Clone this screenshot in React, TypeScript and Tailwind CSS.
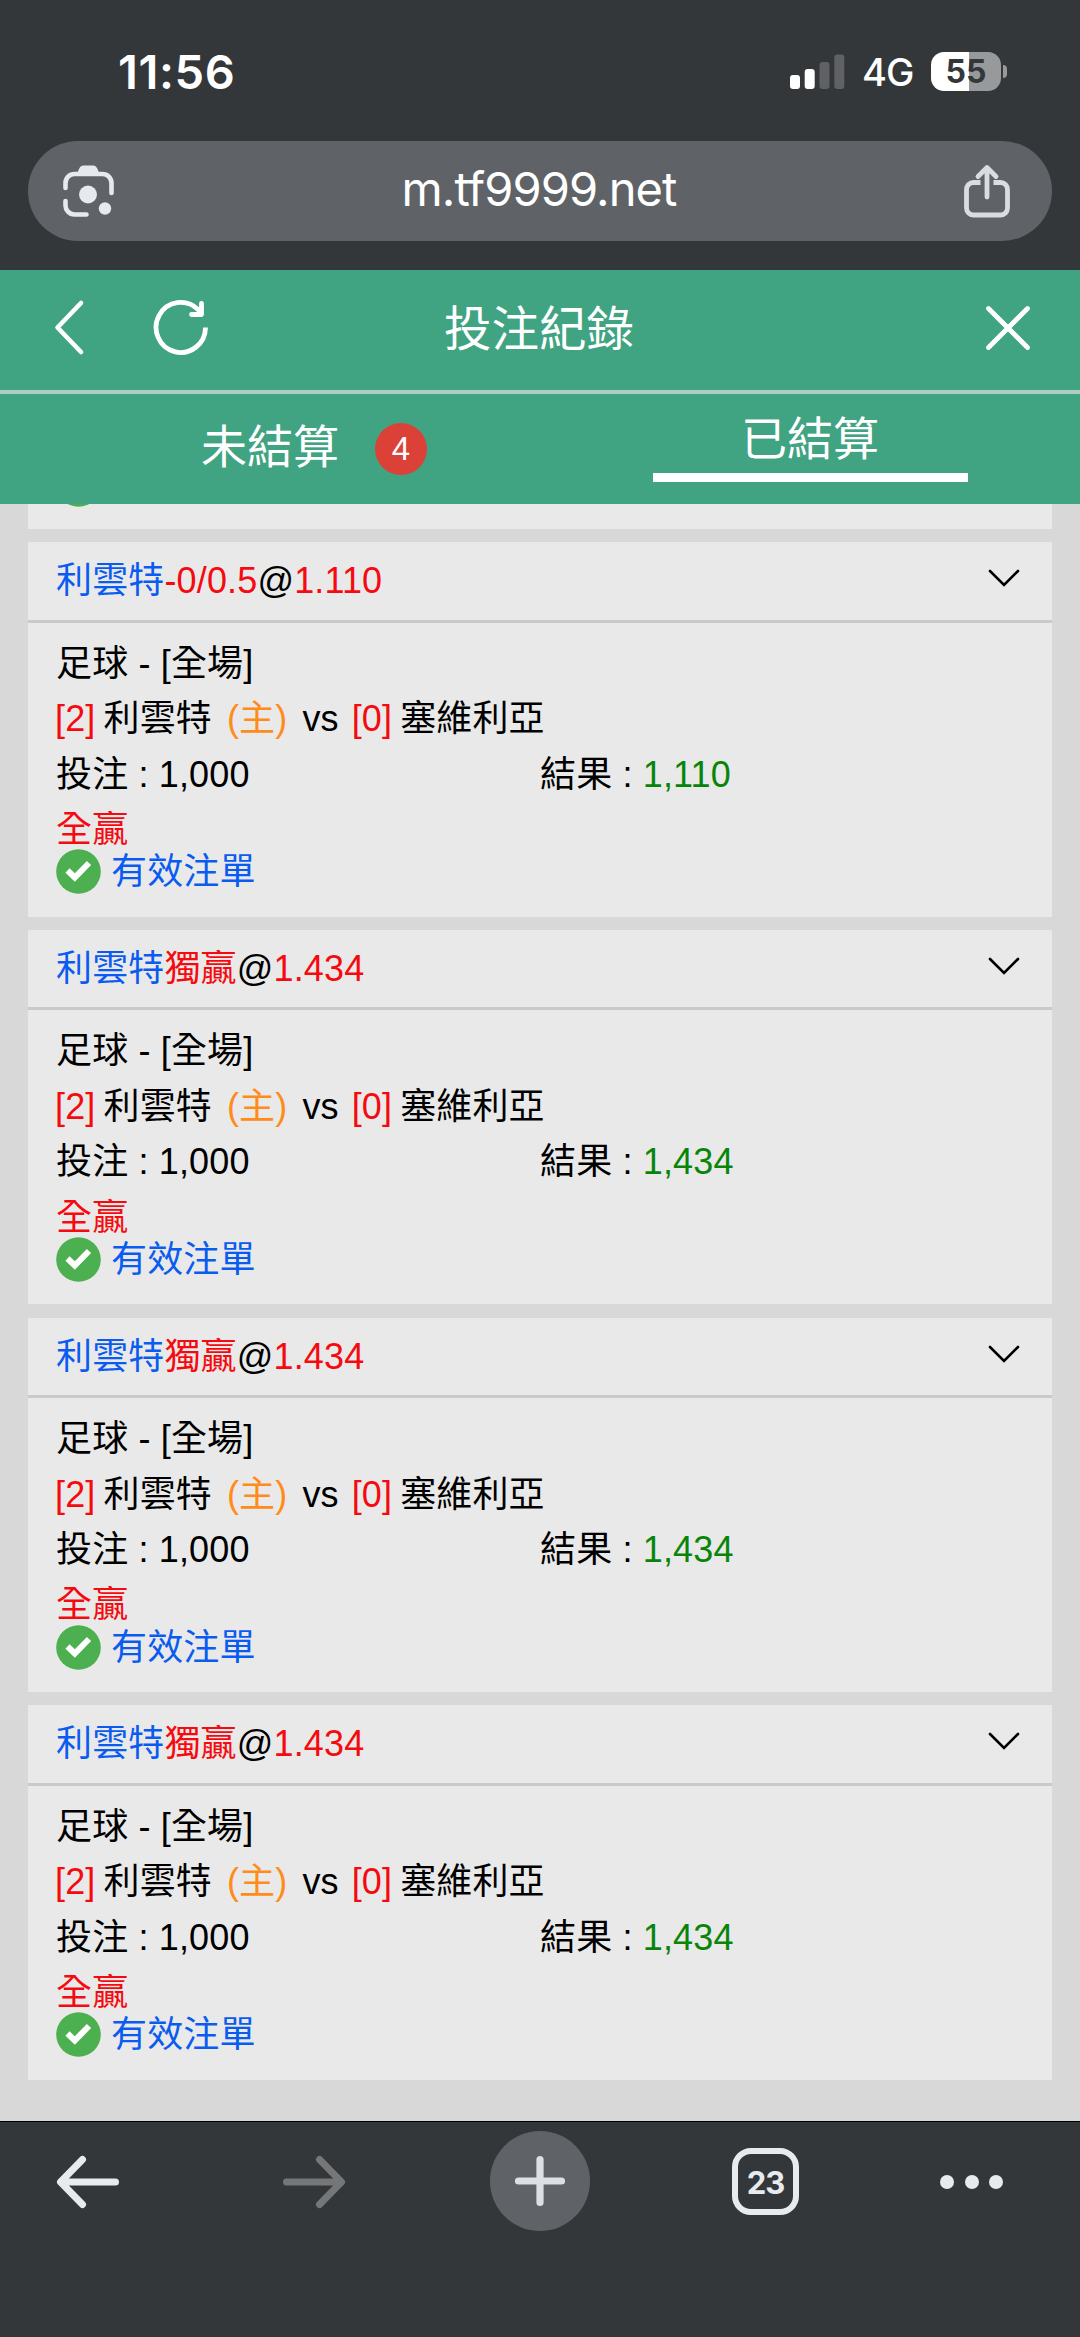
import React, { useState } from 'react';

interface Bet {
  id: number;
  team: string;
  pick: string;
  odds: string;
  stake: string;
  result: string;
}

type Tab = 'open' | 'settled';

const bets: Bet[] = [
  { id: 1, team: '利雲特', pick: '-0/0.5', odds: '1.110', stake: '1,000', result: '1,110' },
  { id: 2, team: '利雲特', pick: '獨贏', odds: '1.434', stake: '1,000', result: '1,434' },
  { id: 3, team: '利雲特', pick: '獨贏', odds: '1.434', stake: '1,000', result: '1,434' },
  { id: 4, team: '利雲特', pick: '獨贏', odds: '1.434', stake: '1,000', result: '1,434' },
];

const StatusBar = () => (
  <div className="flex h-[141px] items-start justify-between pl-[118px] pr-[73px] text-white">
    <span className="mt-[43px] text-[47px] leading-[58px] font-semibold tracking-[0.6px]">11:56</span>
    <div className="mt-[52px] flex h-[39px] items-center">
      <svg className="h-[39px] w-[55px]" viewBox="0 0 55 39">
        <rect x="0" y="23" width="10" height="14" rx="3" fill="#fff" />
        <rect x="14.7" y="17" width="10" height="20" rx="3" fill="#fff" />
        <rect x="29.5" y="10" width="10" height="27" rx="3" fill="#5f6164" />
        <rect x="44.3" y="2.5" width="10" height="34.5" rx="3" fill="#5f6164" />
      </svg>
      <span className="mt-[2px] ml-[17px] w-[69px] text-[38px] leading-[39px] font-medium tracking-[-1px]">4G</span>
      <div className="flex items-center gap-[2px]">
        <div className="flex h-[39px] w-[70px] items-center justify-center rounded-[13px] bg-linear-to-r from-white from-[54%] to-[#97999b] to-[54%]">
          <span className="text-[32px] leading-none font-bold text-[#34373a]">55</span>
        </div>
        <div className="h-[13px] w-[4px] rounded-r-full bg-[#97999b]" />
      </div>
    </div>
  </div>
);

const AddressBar = () => (
  <div className="mx-[28px] flex h-[100px] items-center justify-between rounded-full bg-[#5f6367] pr-[42px] pl-[35px]">
    <svg className="h-[52px] w-[51px]" viewBox="0 0 51 52" fill="none">
      <path
        d="M2.5 23V18a9 9 0 0 1 9-9H39.500a9 9 0 0 1 9 9V28M2.500 36V40a9 9 0 0 0 9 9.500H23.500"
        stroke="#e6e9ed"
        strokeWidth="4.6"
        strokeLinecap="round"
      />
      <path d="M14 9.500C16 3.500 17 .5 20.500 .5H30c3.500 0 4.500 3 6.500 9Z" fill="#e6e9ed" />
      <circle cx="25" cy="29.500" r="9" fill="#e6e9ed" />
      <circle cx="42" cy="43.500" r="6.200" fill="#e6e9ed" />
    </svg>
    <span className="mb-[5px] text-[47px] leading-none tracking-[-0.9px] text-white">m.tf9999.net</span>
    <svg className="h-[54px] w-[46px]" viewBox="0 0 46 54" fill="none" stroke="#d9dce1" strokeWidth="4.800">
      <path d="M16.500 18.500H9.500a7 7 0 0 0-7 7V44a7 7 0 0 0 7 7H36.500a7 7 0 0 0 7-7V25.500a7 7 0 0 0-7-7H29.500" />
      <path d="M23 33V4M14 12.500 23 3.500l9 9" strokeLinecap="round" strokeLinejoin="round" />
    </svg>
  </div>
);

const ValidIcon = () => (
  <svg className="h-[45px] w-[45px]" viewBox="0 0 45 45">
    <circle cx="22.500" cy="22.500" r="22.300" fill="#4caf50" />
    <path d="M11.500 21.500 18.800 28.500 33 14" fill="none" stroke="#fff" strokeWidth="6" />
  </svg>
);

const BetCard = ({ bet }: { bet: Bet }) => (
  <div className="h-[374.4px] shrink-0 bg-[#e9e9e9]">
    <div className="flex h-[80.500px] items-start justify-between border-b-[3px] border-[#c9c9c9] pt-[11px] pr-[31px] pl-[28px]">
      <p className="leading-[55.400px] text-[#0a5cf0]">
        {bet.team}
        <span className="text-[#f50a0f]">{bet.pick}</span>
        <span className="text-black">@</span>
        <span className="text-[#f50a0f]">{bet.odds}</span>
      </p>
      <svg className="mt-[15px] h-[20px] w-[34px]" viewBox="0 0 34 20" fill="none" stroke="#000" strokeWidth="2.600">
        <path d="M3 3 17 17 31 3" strokeLinecap="round" />
      </svg>
    </div>
    <div className="px-[28px] pt-[13px] leading-[55.400px] whitespace-pre text-black">
      <p>足球 - [全場]</p>
      <p className="flex">
        <span className="-ml-[1px] text-[#f50a0f]">[2]</span>
        <span className="ml-[8px]">利雲特</span>
        <span className="ml-[15px] text-[#ff8c1a]">(主)</span>
        <span className="ml-[15px]">vs</span>
        <span className="ml-[13px] text-[#f50a0f]">[0]</span>
        <span className="ml-[8px]">塞維利亞</span>
      </p>
      <div className="flex">
        <p className="w-[484px]">投注 : {bet.stake}</p>
        <p>
          結果 : <span className="text-[#088508]">{bet.result}</span>
        </p>
      </div>
      <p className="text-[#f50a0f]">全贏</p>
      <div className="-mt-[8px] flex h-[45px] items-center gap-[10px]">
        <ValidIcon />
        <span className="text-[#0a5cf0]">有效注單</span>
      </div>
    </div>
  </div>
);

const Toolbar = () => (
  <div className="flex h-[216px] items-start border-t border-black bg-[#34373a]">
    <button className="mt-[33px] ml-[56px]">
      <svg className="h-[54px] w-[64px]" viewBox="0 0 64 54" fill="none" stroke="#e8ebee" strokeWidth="7">
        <path d="M59.500 27H5M26.500 4.500 4.500 27l22 22.500" strokeLinecap="round" strokeLinejoin="round" />
      </svg>
    </button>
    <button className="mt-[33px] ml-[162px]">
      <svg className="h-[54px] w-[64px]" viewBox="0 0 64 54" fill="none" stroke="#757678" strokeWidth="7">
        <path d="M4.500 27H59M37.500 4.500l22 22.500-22 22.500" strokeLinecap="round" strokeLinejoin="round" />
      </svg>
    </button>
    <button className="mt-[9px] ml-[144px] flex h-[100px] w-[100px] items-center justify-center rounded-full bg-[#5f6367]">
      <svg className="h-[52px] w-[52px]" viewBox="0 0 52 52" fill="none" stroke="#dcdfe4" strokeWidth="7.200">
        <path d="M26 4.500V47.500M4.500 26H47.500" strokeLinecap="round" />
      </svg>
    </button>
    <button className="mt-[26px] ml-[142px] flex h-[67px] w-[67px] items-center justify-center rounded-[19px] border-[6px] border-[#e8ebee] pt-[2px] text-[31px] leading-none font-bold tracking-[-1px] text-[#e8ebee]">
      23
    </button>
    <button className="mt-[53px] ml-[141px] flex gap-[10.500px]">
      <span className="h-[14px] w-[14px] rounded-full bg-[#e8ebee]" />
      <span className="h-[14px] w-[14px] rounded-full bg-[#e8ebee]" />
      <span className="h-[14px] w-[14px] rounded-full bg-[#e8ebee]" />
    </button>
  </div>
);

export default function App() {
  const [tab, setTab] = useState<Tab>('settled');

  const tabClass = (active: boolean) =>
    active
      ? 'h-[88px] w-[315px] border-b-[9px] border-white'
      : 'h-[88px] w-[315px]';

  return (
    <div lang="zh-Hant" className="flex h-[2337px] w-[1080px] flex-col overflow-hidden bg-[#d8d8d8]">
      {/* Browser chrome */}
      <div className="h-[270px] shrink-0 bg-[#34373a] font-['Inter','Noto_Sans_CJK_TC',sans-serif]">
        <StatusBar />
        <AddressBar />
      </div>

      <div className="flex min-h-0 flex-1 flex-col font-['Liberation_Sans','Noto_Sans_CJK_TC',sans-serif] text-[36px]">
        {/* Page header */}
        <div className="flex h-[124px] shrink-0 items-start border-b-[4px] border-[#b0cdc2] bg-[#40a381] text-white">
          <button className="mt-[29px] ml-[53px]">
            <svg className="h-[57px] w-[32px]" viewBox="0 0 32 57" fill="none" stroke="#fff" strokeWidth="4.600">
              <path d="M28 4 4.500 28.500 28 53" strokeLinecap="round" strokeLinejoin="round" />
            </svg>
          </button>
          <button className="mt-[29px] ml-[68px]">
            <svg className="h-[57px] w-[56px]" viewBox="0 0 56 57" fill="none" stroke="#fff" strokeWidth="4.800">
              <path d="M52.500 28.500A24.700 25 0 1 1 45 10.500L49 15" />
              <path d="M48.500 4.500V15.500H38.500" strokeLinecap="round" strokeLinejoin="round" />
            </svg>
          </button>
          <h1 className="mt-[25px] ml-[235px] text-[47.500px] leading-[70px]">投注紀錄</h1>
          <button className="mt-[34px] ml-[350px]">
            <svg className="h-[48px] w-[48px]" viewBox="0 0 48 48" fill="none" stroke="#fff" strokeWidth="4.800">
              <path d="M4.500 4.500 43.500 43.500M43.500 4.500 4.500 43.500" strokeLinecap="round" />
            </svg>
          </button>
        </div>

        {/* Tabs */}
        <div className="flex h-[110px] shrink-0 items-start bg-[#40a381] text-[46px] text-white">
          <button className="flex flex-1 justify-center" onClick={() => setTab('open')}>
            <div className={tabClass(tab === 'open')}>
              <span className="relative inline-block leading-[106px]">
                未結算
                <span className="absolute top-[29px] left-[174px] flex h-[52px] w-[52px] items-center justify-center rounded-full bg-[#dc4138] pb-[1px] text-[33px] leading-none">
                  4
                </span>
              </span>
            </div>
          </button>
          <button className="flex flex-1 justify-center" onClick={() => setTab('settled')}>
            <div className={tabClass(tab === 'settled')}>
              <span className="inline-block leading-[90px]">已結算</span>
            </div>
          </button>
        </div>

        {/* Settled bets, scrolled so that the first card is cut by the tabs */}
        <div className="flex min-h-0 flex-1 flex-col gap-[13.300px] overflow-hidden px-[28px] tracking-[0.15px]">
          <div className="flex h-[25px] shrink-0 flex-col justify-end overflow-hidden bg-[#e9e9e9] pb-[22px] pl-[28px]">
            <div className="flex h-[3px] items-end">
              <ValidIcon />
            </div>
          </div>
          {bets.map((bet) => (
            <BetCard key={bet.id} bet={bet} />
          ))}
        </div>
      </div>

      <div className="font-['Inter','Noto_Sans_CJK_TC',sans-serif]">
        <Toolbar />
      </div>
    </div>
  );
}
